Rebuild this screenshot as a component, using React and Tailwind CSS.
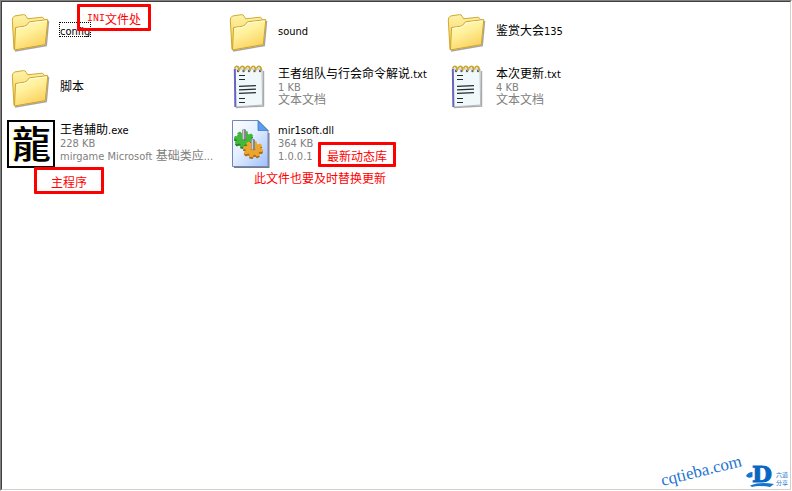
import clsx from "clsx";

function FolderIcon() {
  return (
    <svg viewBox="0 0 48 48" className="h-12 w-12 shrink-0" aria-hidden="true">
      <defs>
        <linearGradient id="folderBack" x1="0" y1="0" x2="0" y2="1">
          <stop offset="0" stopColor="#fff3a8" />
          <stop offset="1" stopColor="#eec94e" />
        </linearGradient>
        <linearGradient id="folderFront" x1="0" y1="0" x2="0.5" y2="1">
          <stop offset="0" stopColor="#fffbc4" />
          <stop offset="0.5" stopColor="#fff09a" />
          <stop offset="1" stopColor="#fbd260" />
        </linearGradient>
      </defs>
      <path d="M8 43 39.2 37.5 41.5 13" fill="none" stroke="#6b6b6b" strokeOpacity="0.6" strokeWidth="1.6" />
      <path
        d="M7 41.5 5.3 12Q5.2 9.5 7.5 8L16.5 6.6Q18.4 6.5 19.2 8.4L20.6 10.8 35.5 9.2 37.5 11.5 40 12 30 38Z"
        fill="url(#folderBack)"
        stroke="#d0a92c"
      />
      <path
        d="M7.5 42 8.5 19.6 17.5 18.2Q19.6 17.8 20.6 16L22.5 13.8 40.8 11.6 38.3 36.6Z"
        fill="url(#folderFront)"
        stroke="#cfa325"
      />
      <path d="M9.5 20.5 18 19.2Q20.4 18.8 21.5 16.8L23 14.9 39.5 12.9" fill="none" stroke="#fffde8" />
    </svg>
  );
}

function TextFileIcon() {
  return (
    <svg viewBox="0 0 48 48" className="h-12 w-12 shrink-0" aria-hidden="true">
      <path d="M11 43.5 38.5 42V7" fill="none" stroke="#555" strokeOpacity="0.5" strokeWidth="1.4" />
      <path d="M9.5 5H37L37.6 41 10.2 43Z" fill="#f1f8f9" stroke="#a5adb8" strokeWidth="0.8" />
      <path d="M9.8 5 10.4 43" stroke="#6964bf" strokeWidth="2" />
      <path
        d="M14 11.5h6M14 15.5h6M14 22.3l17-.6M14 25.8l17-.6M14 29.3l17-.6M14 34.5h6M14 38.5h6"
        stroke="#222c30"
        strokeWidth="1.2"
      />
      {[12, 17.5, 23, 28.5, 34].map((x) => (
        <g key={x}>
          <circle cx={x + 1} cy="7" r="1.2" fill="#5c5c83" />
          <path d={`M${x - 2.4} 4.6q1-3 3-2t1.3 4.6`} fill="none" stroke="#c8a52b" strokeWidth="1.7" />
        </g>
      ))}
    </svg>
  );
}

function Gear({ cx, cy, fill, edge }) {
  const teeth = [12, 57, 102, 147];
  return (
    <g transform={`translate(${cx} ${cy}) scale(1 .8)`}>
      <g fill={edge} transform="translate(0 2.4)">
        <circle r="7.6" />
        {teeth.map((a) => <rect key={a} x="-10" y="-2" width="20" height="4" rx="1" transform={`rotate(${a})`} />)}
      </g>
      <g fill={fill}>
        <circle r="7.6" />
        {teeth.map((a) => <rect key={a} x="-10" y="-2" width="20" height="4" rx="1" transform={`rotate(${a})`} />)}
      </g>
      <ellipse rx="2.4" ry="1.6" fill={edge} />
      <path d="M-2-11.5Q0-13.5 2-11.5V.5H-2Z" fill="#85888e" />
      <path d="M-.7-12V.5" stroke="#d3d5d9" strokeWidth="1.2" />
    </g>
  );
}

function DllIcon() {
  return (
    <svg viewBox="0 0 48 48" className="h-12 w-12 shrink-0" aria-hidden="true">
      <defs>
        <linearGradient id="dllPage" x1="0" y1="0" x2="1" y2="1">
          <stop offset="0" stopColor="#ffffff" />
          <stop offset="0.45" stopColor="#e3eeff" />
          <stop offset="1" stopColor="#9fc0fb" />
        </linearGradient>
      </defs>
      <path d="M9 47.6H43.8V13" fill="none" stroke="#444" strokeOpacity="0.7" strokeWidth="1.4" />
      <path d="M7.5 .5H33L43 10.5V46.5H7.5Z" fill="url(#dllPage)" stroke="#7186bd" />
      <path d="M33 .5 43 10.5H33Z" fill="#5b9df0" stroke="#3b6bb8" strokeWidth="0.7" />
      <Gear cx={19} cy={19} fill="#43b83c" edge="#248126" />
      <Gear cx={28} cy={29} fill="#eda62d" edge="#aa6c15" />
    </svg>
  );
}

function DragonIcon() {
  return (
    <span className='flex h-12 w-12 shrink-0 items-center justify-center border-2 border-black bg-white pb-1 font-["Noto_Sans_CJK_TC",sans-serif] text-[38px] leading-10 font-normal text-black [text-shadow:1px_0_#000040,-1px_0_#ffff60]'>
      龍
    </span>
  );
}

const icons = {
  folder: FolderIcon,
  text: TextFileIcon,
  dll: DllIcon,
  dragon: DragonIcon,
};

// Chinese runs sit one size above the Latin ones
function MixedText({ children }) {
  return children.split(/([\u4e00-\u9fff]+)/).filter(Boolean).map((part, i) => (
    <span key={i} className={/[\u4e00-\u9fff]/.test(part) ? "text-[12px]" : "text-[11px]"}>
      {part}
    </span>
  ));
}

function Callout({ className, children }) {
  return (
    <span
      className={clsx(
        'absolute z-10 flex items-center rounded-[1px] border-3 border-[#ff0000] pt-0.5 font-["Noto_Sans_CJK_SC",sans-serif] text-[12px] leading-4 whitespace-nowrap text-[#ff0000]',
        className
      )}
    >
      {children}
    </span>
  );
}

function FileItem({ icon, name, details = [], focused, children }) {
  const Icon = icons[icon];
  return (
    <li className="relative flex h-14 items-center gap-[5px]">
      <Icon />
      <div className="flex flex-col items-start pb-1.5 leading-[13px] whitespace-nowrap">
        <span className={clsx("block h-[13px] text-black", focused && "outline-1 outline-dotted outline-black")}>
          <MixedText>{name}</MixedText>
        </span>
        {details.map((line) => (
          <span key={line} className="block h-[13px] text-[#808080]">
            <MixedText>{line}</MixedText>
          </span>
        ))}
      </div>
      {children}
    </li>
  );
}

function Watermark() {
  return (
    <div className="mt-auto flex items-end justify-end pr-0.5">
      <span className='-rotate-14 pb-2 font-["Liberation_Serif",serif] text-[17px] leading-5 text-[#1c72d4]'>cqtieba.com</span>
      <div className="flex items-end pb-0.5">
        <svg viewBox="0 0 32 24" className="h-6 w-8 overflow-visible" aria-hidden="true">
          <path d="M2 13Q4 9 8.5 9V14Q4 16 2 13Z" fill="#1475cf" />
          <text x="8" y="19" fontFamily="DejaVu Serif, serif" fontSize="23" fontWeight="bold" fill="#0866c2" stroke="#0866c2">
            D
          </text>
          <path d="M6 22.5Q16 18.5 30 21L26 24Q14 22 8 24Z" fill="#1475cf" />
        </svg>
        <span className='flex w-3 flex-col font-["Noto_Sans_CJK_SC",sans-serif] text-[6px] leading-[8px] text-[#1475cf]'>
          <span>六道</span>
          <span>分享</span>
        </span>
      </div>
    </div>
  );
}

export default function App() {
  return (
    <div className="flex min-h-screen flex-col border border-white border-t-[#808080] border-l-[#808080] bg-white">
      <main className='flex flex-1 flex-col border border-[#d4d0c8] border-t-[#404040] border-l-[#404040] font-["DejaVu_Sans_Condensed","Noto_Sans_CJK_SC",sans-serif]'>
        <ul className="grid grid-cols-[repeat(auto-fill,218px)] pt-0.5 pl-[5px]">
          <FileItem icon="folder" name="config" focused>
            <Callout className="top-0 left-[70px] h-[27px] w-[74px] pl-[7px]">
              <span className='font-["Liberation_Mono",monospace] text-[10px]'>INI</span>文件处
            </Callout>
          </FileItem>
          <FileItem icon="folder" name="sound" />
          <FileItem icon="folder" name="鉴赏大会135" />
          <FileItem icon="folder" name="脚本" />
          <FileItem icon="text" name="王者组队与行会命令解说.txt" details={["1 KB", "文本文档"]} />
          <FileItem icon="text" name="本次更新.txt" details={["4 KB", "文本文档"]} />
          <FileItem icon="dragon" name="王者辅助.exe" details={["228 KB", "mirgame Microsoft 基础类应..."]}>
            <Callout className="top-[51px] left-[27px] h-[27px] w-[70px] justify-center">主程序</Callout>
          </FileItem>
          <FileItem icon="dll" name="mir1soft.dll" details={["364 KB", "1.0.0.1"]}>
            <Callout className="top-[26px] left-[93px] h-[25px] w-[78px] justify-center">最新动态库</Callout>
            <span className='absolute top-[54px] left-[29px] font-["Noto_Sans_CJK_SC",sans-serif] text-[12px] leading-4 whitespace-nowrap text-[#ff0000]'>
              此文件也要及时替换更新
            </span>
          </FileItem>
        </ul>
        <Watermark />
      </main>
    </div>
  );
}
